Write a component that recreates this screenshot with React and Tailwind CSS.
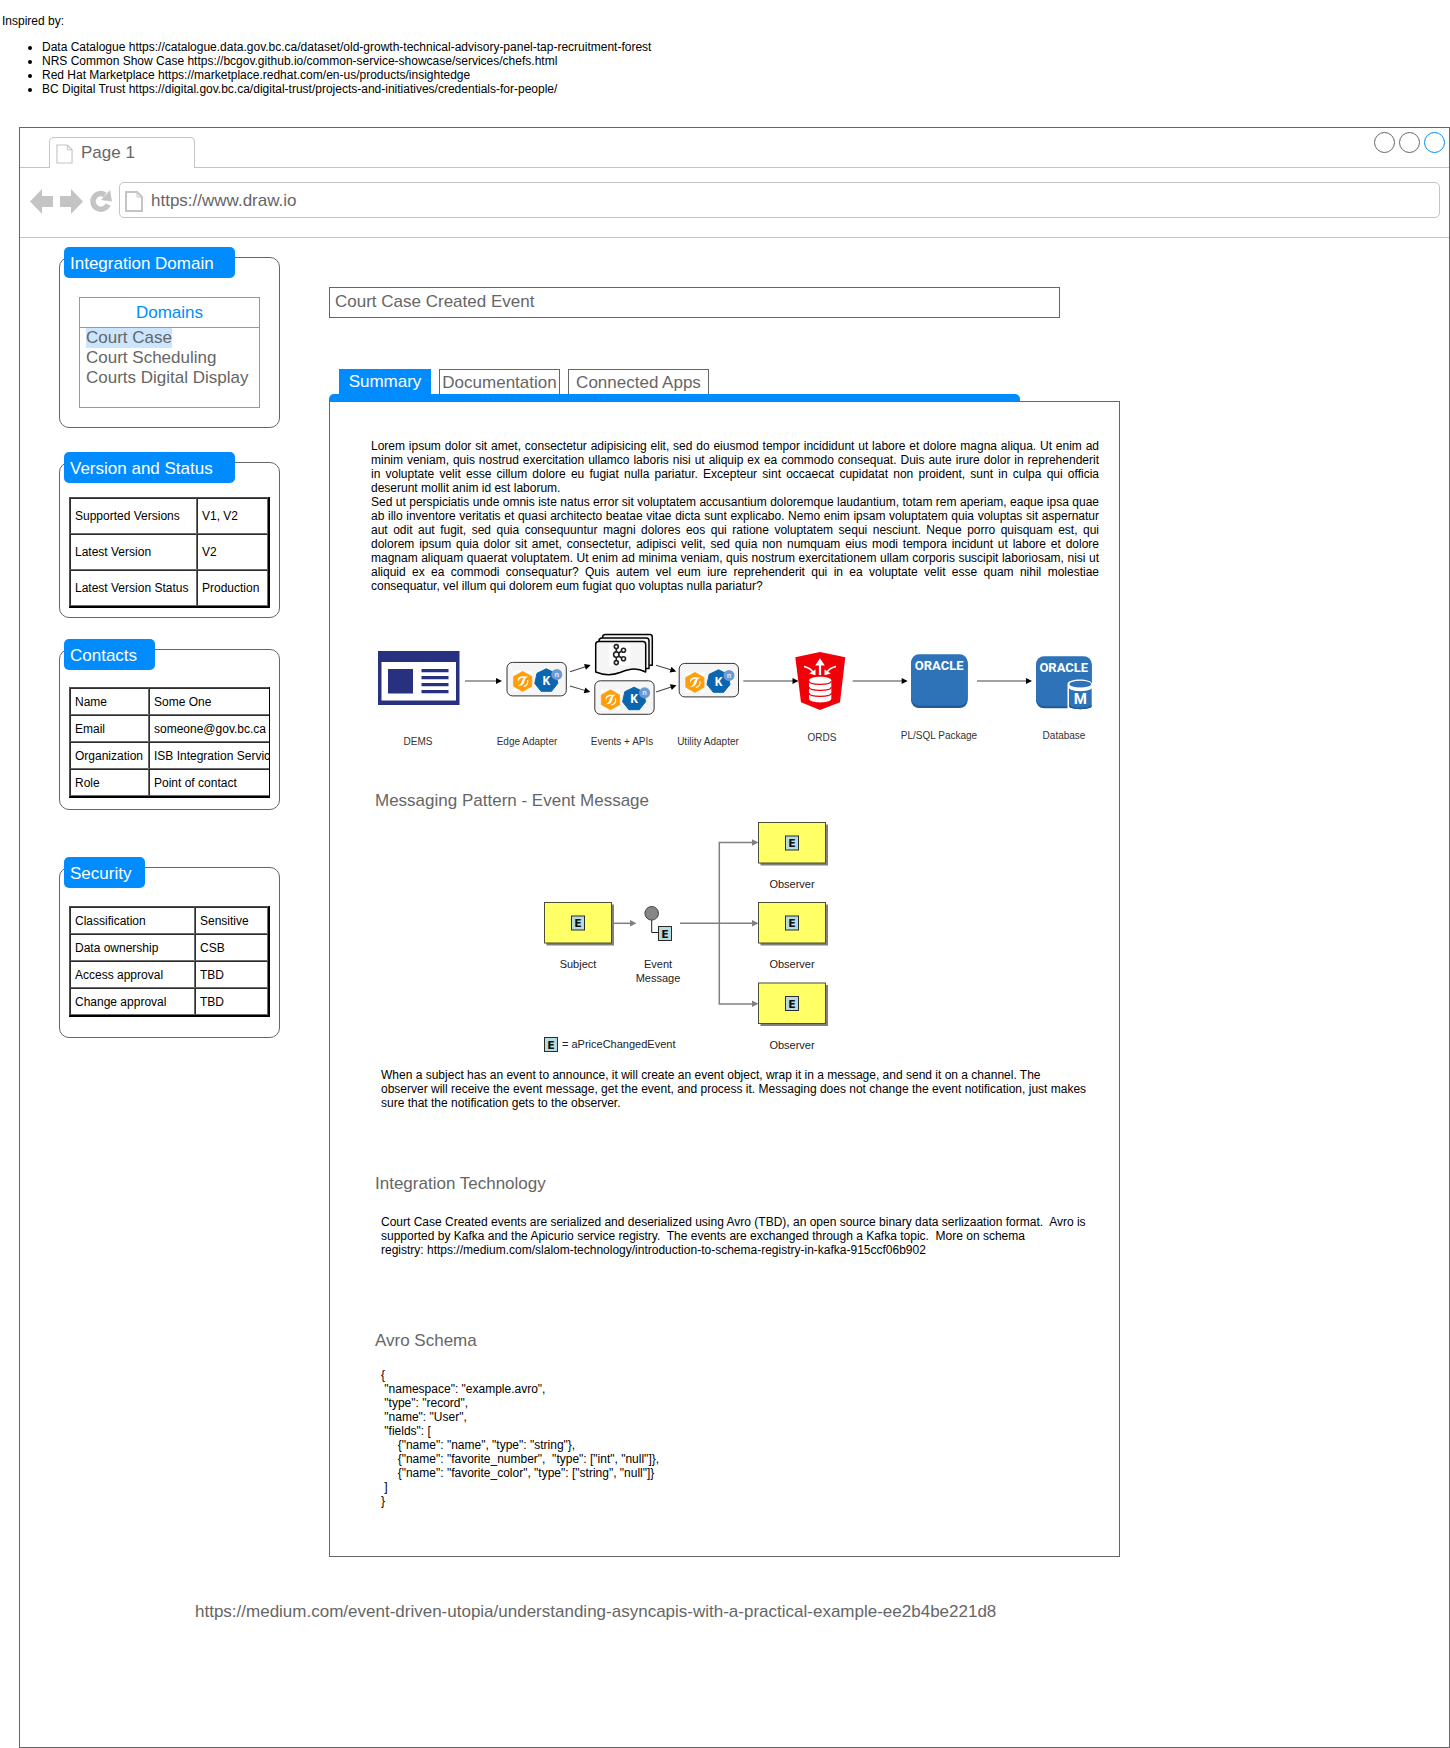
import React from "react";

const inspirations = [
  "Data Catalogue https://catalogue.data.gov.bc.ca/dataset/old-growth-technical-advisory-panel-tap-recruitment-forest",
  "NRS Common Show Case https://bcgov.github.io/common-service-showcase/services/chefs.html",
  "Red Hat Marketplace https://marketplace.redhat.com/en-us/products/insightedge",
  "BC Digital Trust https://digital.gov.bc.ca/digital-trust/projects-and-initiatives/credentials-for-people/",
];

const schema = `{
 "namespace": "example.avro",
 "type": "record",
 "name": "User",
 "fields": [
     {"name": "name", "type": "string"},
     {"name": "favorite_number",  "type": ["int", "null"]},
     {"name": "favorite_color", "type": ["string", "null"]}
 ]
}`;

function FileIcon({ className, strokeWidth }) {
  return (
    <svg viewBox="0 0 18 21" className={className} fill="none" stroke="#c4c4c4" strokeWidth={strokeWidth} aria-hidden="true">
      <path d="M1 1H12L17 6V20H1Z" />
      <path d="M12 1V6H17" strokeWidth="1" />
    </svg>
  );
}

function ArrowIcon({ flip }) {
  return (
    <svg viewBox="0 0 23 25" width="23" height="25" fill="#c4c4c4" aria-hidden="true">
      <path d={flip ? "M23 12.5L11 0V7H0V18H11V25Z" : "M0 12.5L12 0V7H23V18H12V25Z"} />
    </svg>
  );
}

function ReloadIcon() {
  return (
    <svg viewBox="0 0 22 24" width="22" height="24" aria-hidden="true">
      <path d="M18 15.5A7.8 7.8 0 1 1 15 5.8" fill="none" stroke="#c4c4c4" strokeWidth="5.5" />
      <path d="M20 1L22 12.5L11 11Z" fill="#c4c4c4" />
    </svg>
  );
}

function Card({ title, pillClass, bodyClass, children }) {
  return (
    <section className="rounded-[10px] border border-[#666]">
      <h2 className={`-mt-[11px] ml-1 h-[31px] rounded-[5px] bg-[#008cff] pl-1.5 text-[17px] leading-[33px] text-white ${pillClass}`}>
        {title}
      </h2>
      <div className={bodyClass}>{children}</div>
    </section>
  );
}

function DataTable({ rows, label, firstCol, rowClass }) {
  return (
    <div className="overflow-hidden border-r border-b border-black">
      <table
        aria-label={label}
        className="w-full border-separate border-spacing-0 border border-t-[#4d4d4d] border-r-black border-b-black border-l-[#4d4d4d] text-[12px] leading-[14px] text-black"
      >
        <tbody>
          {rows.map(([k, v]) => (
            <tr key={k} className={rowClass}>
              <th
                scope="row"
                className={`border border-t-[#2c2c2c] border-r-[#6b6b6b] border-b-[#6b6b6b] border-l-[#2c2c2c] px-1 py-0 text-left font-normal whitespace-nowrap ${firstCol}`}
              >
                {k}
              </th>
              <td className="border border-t-[#2c2c2c] border-r-[#6b6b6b] border-b-[#6b6b6b] border-l-[#2c2c2c] px-1 py-0 whitespace-nowrap">{v}</td>
            </tr>
          ))}
        </tbody>
      </table>
    </div>
  );
}

function Adapter({ x, y }) {
  return (
    <g transform={`translate(${x} ${y})`}>
      <rect width="59.3" height="33.5" rx="5.5" fill="#f5f5f5" stroke="#333" strokeWidth="1" />
      <rect x="6.3" y="8.5" width="19" height="20.5" fill="#fff" />
      <path d="M15.7 9L24.8 14.1V23.9L15.7 29L6.6 23.9V14.1Z" fill="#ff9d0a" stroke="#ff9d0a" strokeWidth="0.8" strokeLinejoin="round" />
      <path
        d="M11.2 19.4C9.8 16 12.6 13.6 16 13.9L21.8 14C18.6 14.6 18 16.6 17.4 19.2C16.7 22.4 14.2 24 10.4 23.4C13.2 22.6 14.2 21.4 14.6 19.4C15 17.6 15.8 16.4 17 15.6C13.8 15.2 11.6 16.4 11.2 19.4Z"
        fill="#fff"
      />
      <path d="M20.6 17.6C21.4 20.6 19.8 23.2 16.6 24.2" fill="none" stroke="#fff" strokeWidth="1.2" />
      <path d="M39.3 6.4L48.6 10.9L50.8 21L44.5 28.9H34.1L27.8 21L30 10.9Z" fill="#0b66b0" stroke="#0b66b0" strokeWidth="1" strokeLinejoin="round" />
      <text x="39.2" y="22.5" fontSize="12" fontWeight="700" fill="#fff" textAnchor="middle" fontFamily="'Open Sans', sans-serif">K</text>
      <circle cx="49.8" cy="12" r="5.5" fill="#6a9bd3" />
      <text x="49.8" y="14.5" fontSize="7" fontWeight="700" fill="#dce8f6" textAnchor="middle" fontFamily="'Open Sans', sans-serif">n</text>
    </g>
  );
}

function FlowArrow({ x1, y1, x2, y2 }) {
  const angle = (Math.atan2(y2 - y1, x2 - x1) * 180) / Math.PI;
  const length = Math.hypot(x2 - x1, y2 - y1);
  return (
    <g transform={`translate(${x1} ${y1}) rotate(${angle})`}>
      <path d={`M0 0H${length - 4}`} stroke="#444" strokeWidth="1" />
      <path d={`M${length} 0L${length - 6} -3V3Z`} fill="#000" />
    </g>
  );
}

function FlowDiagram() {
  const labels = [
    [418, 745, "DEMS"],
    [527, 745, "Edge Adapter"],
    [622, 745, "Events + APIs"],
    [708, 745, "Utility Adapter"],
    [822, 741, "ORDS"],
    [939, 739, "PL/SQL Package"],
    [1064, 739, "Database"],
  ];
  return (
    <svg viewBox="371 625 728 130" className="mt-8 block w-full" role="img" aria-label="Integration flow from DEMS to the database">
      <rect x="378" y="651" width="81.5" height="54" fill="#28317f" />
      <rect x="381.5" y="662" width="74.5" height="38.5" fill="#fff" />
      <rect x="388" y="669" width="25" height="24.5" fill="#28317f" />
      <path d="M421.5 670.7H448.5M421.5 677.7H448.5M421.5 684.7H448.5M421.5 691.7H448.5" stroke="#28317f" strokeWidth="3.2" />

      <FlowArrow x1={465} y1={681} x2={502} y2={681} />
      <FlowArrow x1={570} y1={671.7} x2={590.7} y2={665} />
      <FlowArrow x1={570} y1={686} x2={590.3} y2={692} />
      <FlowArrow x1={656} y1={665.3} x2={676.3} y2={671.4} />
      <FlowArrow x1={656} y1={692} x2={676.5} y2={685.3} />
      <FlowArrow x1={743.3} y1={681} x2={798.5} y2={681} />

      <g fill="#f5f5f5" stroke="#000" strokeWidth="1.5" strokeLinejoin="round">
        <path d="M602.5 640V637.5Q602.5 634.5 605.5 634.5H650Q652.3 634.5 652.3 637.5V665.2H648" />
        <path d="M599 643V641Q599 638 602 638H646.5Q649 638 649 641V668.5H645" />
        <path d="M595.7 672V644.5Q595.7 641.5 598.7 641.5H643Q645.7 641.5 645.7 644.5V672Q638 668 631 669.2Q625.5 670.2 620 672.5Q608 677 595.7 672Z" />
      </g>
      <rect x="609" y="644" width="21" height="21.5" fill="#fff" />
      <g fill="#fff" stroke="#222" strokeWidth="1.6">
        <path d="M616.3 648V662M616.3 654.5L623.3 650M616.3 654.5L623.3 659" />
        <circle cx="616.3" cy="646.6" r="2" />
        <circle cx="616.3" cy="654.6" r="2.7" />
        <circle cx="616.3" cy="662.6" r="2" />
        <circle cx="623.5" cy="650.2" r="2" />
        <circle cx="623.5" cy="658.8" r="2" />
      </g>

      <Adapter x={507} y={662.4} />
      <Adapter x={594.8} y={680.8} />
      <Adapter x={679.2} y={663.4} />

      <path d="M820 652L845.3 657.3L840 702.3L820 710L801 702.3L795.3 657.3Z" fill="#f00008" />
      <g fill="none" stroke="#fff" strokeWidth="1.6">
        <path d="M820 675V663" strokeWidth="2.2" />
        <path d="M804 666.5Q811 668 813.5 673" />
        <path d="M836 666.5Q829 668 826.5 673" />
      </g>
      <path d="M820 658.3L824.8 665.5H815.2ZM815.5 675.2L809.2 673.6L815.5 669.5ZM824.5 675.2L830.8 673.6L824.5 669.5Z" fill="#fff" />
      <path d="M809 680.5C809 675.5 831.3 675.5 831.3 680.5V698.5C831.3 703.7 809 703.7 809 698.5Z" fill="#fff" />
      <path d="M809 681C809 685.5 831.3 685.5 831.3 681M809 687C809 691.5 831.3 691.5 831.3 687M809 693C809 697.5 831.3 697.5 831.3 693" fill="none" stroke="#f00008" strokeWidth="1.2" />
      <FlowArrow x1={852.7} y1={681} x2={907.7} y2={681} />

      <rect x="911" y="656" width="56.7" height="52" rx="8" fill="#1f5a9a" />
      <rect x="911" y="654.3" width="56.7" height="51.4" rx="8" fill="#2e73b8" />
      <text x="939.2" y="669.8" fontSize="13" fontWeight="700" fill="#fff" textAnchor="middle" fontFamily="Roboto, sans-serif">ORACLE</text>
      <FlowArrow x1={977} y1={681} x2={1032} y2={681} />

      <rect x="1036" y="658" width="55.7" height="50.3" rx="8" fill="#1f5a9a" />
      <rect x="1036" y="656.2" width="55.7" height="50" rx="8" fill="#2e73b8" />
      <text x="1063.8" y="671.6" fontSize="13" fontWeight="700" fill="#fff" textAnchor="middle" fontFamily="Roboto, sans-serif">ORACLE</text>
      <path d="M1067.5 709V684C1067.5 678 1092 678 1092 684V709Z" fill="#fff" />
      <path d="M1069 688.5V706C1069 710.2 1091.7 710.2 1091.7 706V688.5C1088 692 1073 692 1069 688.5Z" fill="#2e73b8" />
      <path d="M1069 706C1069 710.2 1091.7 710.2 1091.7 706V704.5C1091.7 708.6 1069 708.6 1069 704.5Z" fill="#1f5a9a" />
      <ellipse cx="1080.3" cy="684.2" rx="11" ry="3.4" fill="#2e73b8" />
      <text x="1080.2" y="704" fontSize="15" fontWeight="700" fill="#fff" textAnchor="middle" fontFamily="Roboto, sans-serif">M</text>

      <g fontSize="10" fill="#333" textAnchor="middle">
        {labels.map(([x, y, t]) => (
          <text key={t} x={x} y={y}>{t}</text>
        ))}
      </g>
    </svg>
  );
}

function EventBadge({ x, y }) {
  return (
    <g>
      <rect x={x} y={y} width="13" height="14" fill="#b5dde0" stroke="#2b2b2b" strokeWidth="1" />
      <text x={x + 6.6} y={y + 11} fontSize="11" fontWeight="700" fill="#111" textAnchor="middle" fontFamily="'DejaVu Sans', sans-serif">E</text>
    </g>
  );
}

function ActorBox({ x, y, label }) {
  return (
    <g>
      <rect x={x + 2} y={y + 2} width="67.5" height="41" fill="#808080" />
      <rect x={x} y={y} width="67" height="40.5" fill="#ffff66" stroke="#4d4d33" strokeWidth="1" />
      <EventBadge x={x + 27} y={y + 13.5} />
      <text x={x + 33.5} y={y + 65.5} textAnchor="middle">{label}</text>
    </g>
  );
}

function PatternDiagram() {
  return (
    <svg viewBox="371 815 728 240" className="mt-1 block w-full" role="img" aria-label="Event message pattern" fontSize="11" fill="#222">
      <g fill="none" stroke="#808080" strokeWidth="1.5">
        <path d="M612 923.3H632" />
        <path d="M680 923.3H754" />
        <path d="M754 842.5H719.3V1004H754" />
      </g>
      <path d="M636.5 923.3L630 920V926.6ZM758.5 842.5L752 839.2V845.8ZM758.5 923.3L752 920V926.6ZM758.5 1003.8L752 1000.5V1007.1Z" fill="#808080" />
      <ActorBox x={544.5} y={902.5} label="Subject" />
      <ActorBox x={758.5} y={822.5} label="Observer" />
      <ActorBox x={758.5} y={902.5} label="Observer" />
      <ActorBox x={758.5} y={983} label="Observer" />
      <path d="M651.7 920V932.5H659" fill="none" stroke="#222" strokeWidth="1" />
      <circle cx="651.7" cy="913.3" r="6.8" fill="#868686" stroke="#444" strokeWidth="1" />
      <EventBadge x={658.5} y={926.5} />
      <text x="658" y="968" textAnchor="middle">Event</text>
      <text x="658" y="982" textAnchor="middle">Message</text>
      <EventBadge x={544.5} y={1037.5} />
      <text x="562" y="1048">= aPriceChangedEvent</text>
    </svg>
  );
}

export default function App() {
  return (
    <div className="bg-white font-['Liberation_Sans',Arial,sans-serif] text-[12px] leading-[14px] text-black">
      <header className="pt-[14px] pb-[31px] pl-0.5">
        <p>Inspired by:</p>
        <ul className="mt-3 list-disc pl-10">
          {inspirations.map((t) => (
            <li key={t}>{t}</li>
          ))}
        </ul>
      </header>

      <div className="ml-[19px] border border-[#666]">
        <div className="flex h-10 items-stretch">
          <div className="w-[29px] border-b border-[#c4c4c4]" />
          <div className="mt-[9px] flex w-[146px] items-start gap-2 rounded-t-[5px] border border-b-0 border-[#c4c4c4] pt-1.5 pl-1.5">
            <FileIcon className="h-[20px] w-[17px]" strokeWidth="1.2" />
            <span className="text-[17px] leading-[18px] text-[#666]">Page 1</span>
          </div>
          <div className="flex flex-1 justify-end gap-1 border-b border-[#c4c4c4] pt-1 pr-1">
            <button type="button" aria-label="Minimize" className="size-[21px] rounded-full border border-[#666]" />
            <button type="button" aria-label="Maximize" className="size-[21px] rounded-full border border-[#666]" />
            <button type="button" aria-label="Close" className="size-[21px] rounded-full border border-[#008cff]" />
          </div>
        </div>

        <div className="flex items-center border-b border-[#c4c4c4] pt-[14px] pr-[9px] pb-[19px] pl-2.5">
          <div className="flex w-[89px] items-center gap-[7px] pt-0.5">
            <button type="button" aria-label="Back"><ArrowIcon /></button>
            <button type="button" aria-label="Forward"><ArrowIcon flip /></button>
            <button type="button" aria-label="Reload"><ReloadIcon /></button>
          </div>
          <div className="flex h-9 flex-1 items-center gap-2 rounded-[5px] border border-[#c4c4c4] pt-0.5 pl-[5px]">
            <FileIcon className="h-[21px] w-[18px]" strokeWidth="2" />
            <input aria-label="Address" defaultValue="https://www.draw.io" className="h-5 flex-1 bg-transparent text-[17px] leading-5 text-[#666] outline-none" />
          </div>
        </div>

        <div className="flex items-start gap-[49px] pl-[39px]">
          <aside className="w-[221px] shrink-0 pt-[19px]">
            <Card title="Integration Domain" pillClass="w-[171px]" bodyClass="px-[19px] pt-[19px] pb-[19px]">
              <div className="border border-[#999]">
                <h3 className="border-b border-[#999] text-center text-[17px] leading-[29px] text-[#008cff]">Domains</h3>
                <ul className="pb-[19px] pl-1.5 text-[17px] leading-5 text-[#666]">
                  <li className="flex"><button type="button" className="bg-[#cce5ff]">Court Case</button></li>
                  <li className="flex"><button type="button">Court Scheduling</button></li>
                  <li className="flex"><button type="button">Courts Digital Display</button></li>
                </ul>
              </div>
            </Card>
            <div className="mt-[34px]">
              <Card title="Version and Status" pillClass="w-[171px]" bodyClass="px-[9px] pt-3.5 pb-[9px]">
                <DataTable
                  label="Version and Status"
                  firstCol="w-[127px]"
                  rowClass="h-9"
                  rows={[["Supported Versions", "V1, V2"], ["Latest Version", "V2"], ["Latest Version Status", "Production"]]}
                />
              </Card>
            </div>
            <div className="mt-[31px]">
              <Card title="Contacts" pillClass="w-[91px]" bodyClass="px-[9px] pt-[17px] pb-[11px]">
                <DataTable
                  label="Contacts"
                  firstCol="min-w-[79px]"
                  rowClass="h-[27px]"
                  rows={[["Name", "Some One"], ["Email", "someone@gov.bc.ca"], ["Organization", "ISB Integration Services"], ["Role", "Point of contact"]]}
                />
              </Card>
            </div>
            <div className="mt-[57px]">
              <Card title="Security" pillClass="w-[81px]" bodyClass="px-[9px] pt-[18px] pb-5">
                <DataTable
                  label="Security"
                  firstCol="w-[125px]"
                  rowClass="h-[27px]"
                  rows={[["Classification", "Sensitive"], ["Data ownership", "CSB"], ["Access approval", "TBD"], ["Change approval", "TBD"]]}
                />
              </Card>
            </div>
          </aside>

          <main className="max-w-[791px] min-w-0 flex-1 pt-[49px]">
            <input
              aria-label="Event name"
              defaultValue="Court Case Created Event"
              className="block h-[31px] w-full max-w-[731px] border border-[#666] pr-1.5 pb-px pl-[5px] text-[17px] leading-5 text-[#666] outline-none"
            />
            <div role="tablist" className="mt-[51px] flex gap-2 pl-2.5 text-[17px] leading-[26px] text-[#666]">
              <button type="button" role="tab" aria-selected="true" className="h-[25px] w-[92px] bg-[#008cff] text-white">Summary</button>
              <button type="button" role="tab" aria-selected="false" className="h-[25px] w-[121px] border border-b-0 border-[#666]">Documentation</button>
              <button type="button" role="tab" aria-selected="false" className="h-[25px] w-[141px] border border-b-0 border-[#666]">Connected Apps</button>
            </div>
            <div className="relative h-2 max-w-[691px] rounded-t-[5px] bg-[#008cff]" />
            <article className="-mt-px border border-[#666] pt-[37px] pr-5 pb-12 pl-[41px]">
              <div className="text-justify">
                <p>
                  Lorem ipsum dolor sit amet, consectetur adipisicing elit, sed do eiusmod tempor incididunt ut labore et dolore magna aliqua. Ut enim ad minim veniam, quis nostrud exercitation ullamco laboris nisi ut aliquip ex ea commodo consequat. Duis aute irure dolor in reprehenderit in voluptate velit esse cillum dolore eu fugiat nulla pariatur. Excepteur sint occaecat cupidatat non proident, sunt in culpa qui officia deserunt mollit anim id est laborum.
                </p>
                <p>
                  Sed ut perspiciatis unde omnis iste natus error sit voluptatem accusantium doloremque laudantium, totam rem aperiam, eaque ipsa quae ab illo inventore veritatis et quasi architecto beatae vitae dicta sunt explicabo. Nemo enim ipsam voluptatem quia voluptas sit aspernatur aut odit aut fugit, sed quia consequuntur magni dolores eos qui ratione voluptatem sequi nesciunt. Neque porro quisquam est, qui dolorem ipsum quia dolor sit amet, consectetur, adipisci velit, sed quia non numquam eius modi tempora incidunt ut labore et dolore magnam aliquam quaerat voluptatem. Ut enim ad minima veniam, quis nostrum exercitationem ullam corporis suscipit laboriosam, nisi ut aliquid ex ea commodi consequatur? Quis autem vel eum iure reprehenderit qui in ea voluptate velit esse quam nihil molestiae consequatur, vel illum qui dolorem eum fugiat quo voluptas nulla pariatur?
                </p>
              </div>

              <FlowDiagram />

              <h3 className="mt-9 pl-1 text-[17px] leading-5 text-[#666]">Messaging Pattern - Event Message</h3>
              <PatternDiagram />
              <p className="mt-[13px] ml-2.5 max-w-[706px]">
                When a subject has an event to announce, it will create an event object, wrap it in a message, and send it on a channel. The observer will receive the event message, get the event, and process it. Messaging does not change the event notification, just makes sure that the notification gets to the observer.
              </p>

              <h3 className="mt-16 pl-1 text-[17px] leading-5 text-[#666]">Integration Technology</h3>
              <p className="mt-[21px] ml-2.5 max-w-[706px]">
                Court Case Created events are serialized and deserialized using Avro (TBD), an open source binary data serlizaation format.&nbsp; Avro is supported by Kafka and the Apicurio service registry.&nbsp; The events are exchanged through a Kafka topic.&nbsp; More on schema registry:&nbsp;https://medium.com/slalom-technology/introduction-to-schema-registry-in-kafka-915ccf06b902
              </p>

              <h3 className="mt-[74px] pl-1 text-[17px] leading-5 text-[#666]">Avro Schema</h3>
              <pre className="mt-[17px] ml-2.5 font-['Liberation_Sans',Arial,sans-serif]">{schema}</pre>
            </article>
          </main>
        </div>

        <p className="mt-[45px] pb-[125px] pl-[175px] text-[17px] leading-5 text-[#666]">
          <a href="https://medium.com/event-driven-utopia/understanding-asyncapis-with-a-practical-example-ee2b4be221d8">
            https://medium.com/event-driven-utopia/understanding-asyncapis-with-a-practical-example-ee2b4be221d8
          </a>
        </p>
      </div>
    </div>
  );
}
